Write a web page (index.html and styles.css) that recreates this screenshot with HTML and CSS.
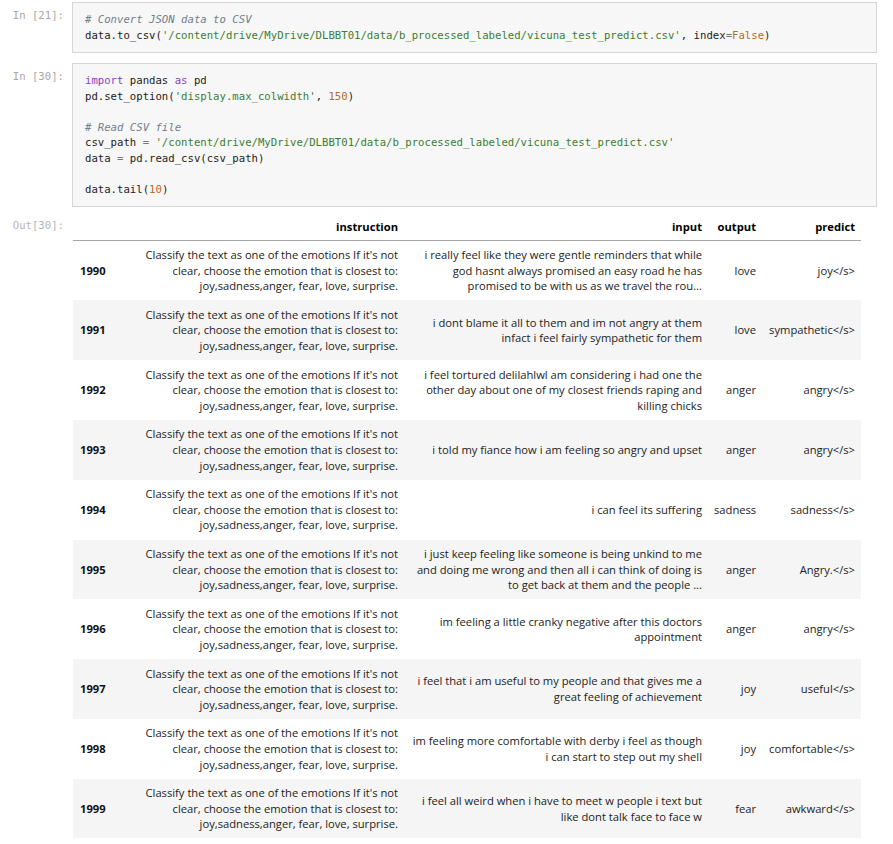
FILE: index.html
```html
<!DOCTYPE html>
<html>
<head>
<meta charset="utf-8">
<link rel="stylesheet" href="styles.css">
</head>
<body>
<div class="notebook">
  <div class="cell first">
    <div class="prompt">In&nbsp;[21]:</div>
    <div class="input"><pre class="code"><span class="cm"># Convert JSON data to CSV</span>
data.to_csv(<span class="st">'/content/drive/MyDrive/DLBBT01/data/b_processed_labeled/vicuna_test_predict.csv'</span>, index<span class="op">=</span><span class="kw2">False</span>)</pre></div>
  </div>
  <div class="cell">
    <div class="prompt">In&nbsp;[30]:</div>
    <div class="input"><pre class="code"><span class="kw">import</span> pandas <span class="kw">as</span> pd
pd.set_option(<span class="st">'display.max_colwidth'</span>, <span class="nu">150</span>)

<span class="cm"># Read CSV file</span>
csv_path <span class="op">=</span> <span class="st">'/content/drive/MyDrive/DLBBT01/data/b_processed_labeled/vicuna_test_predict.csv'</span>
data <span class="op">=</span> pd.read_csv(csv_path)

data.tail(<span class="nu">10</span>)</pre></div>
  </div>
  <div class="cell output">
    <div class="prompt out">Out[30]:</div>
    <div class="result">
      <table class="df">
        <colgroup>
          <col class="c-idx"><col class="c-ins"><col class="c-inp"><col class="c-out"><col class="c-pre">
        </colgroup>
        <thead>
          <tr><th class="idx"></th><th>instruction</th><th>input</th><th>output</th><th>predict</th></tr>
        </thead>
        <tbody>
          <tr><th class="idx">1990</th>
            <td>Classify the text as one of the emotions If it's not<br>clear, choose the emotion that is closest to:<br>joy,sadness,anger, fear, love, surprise.</td>
            <td>i really feel like they were gentle reminders that while<br>god hasnt always promised an easy road he has<br>promised to be with us as we travel the rou...</td>
            <td>love</td><td>joy&lt;/s&gt;</td></tr>
          <tr><th class="idx">1991</th>
            <td>Classify the text as one of the emotions If it's not<br>clear, choose the emotion that is closest to:<br>joy,sadness,anger, fear, love, surprise.</td>
            <td>i dont blame it all to them and im not angry at them<br>infact i feel fairly sympathetic for them</td>
            <td>love</td><td>sympathetic&lt;/s&gt;</td></tr>
          <tr><th class="idx">1992</th>
            <td>Classify the text as one of the emotions If it's not<br>clear, choose the emotion that is closest to:<br>joy,sadness,anger, fear, love, surprise.</td>
            <td>i feel tortured delilahlwl am considering i had one the<br>other day about one of my closest friends raping and<br>killing chicks</td>
            <td>anger</td><td>angry&lt;/s&gt;</td></tr>
          <tr><th class="idx">1993</th>
            <td>Classify the text as one of the emotions If it's not<br>clear, choose the emotion that is closest to:<br>joy,sadness,anger, fear, love, surprise.</td>
            <td>i told my fiance how i am feeling so angry and upset</td>
            <td>anger</td><td>angry&lt;/s&gt;</td></tr>
          <tr><th class="idx">1994</th>
            <td>Classify the text as one of the emotions If it's not<br>clear, choose the emotion that is closest to:<br>joy,sadness,anger, fear, love, surprise.</td>
            <td>i can feel its suffering</td>
            <td>sadness</td><td>sadness&lt;/s&gt;</td></tr>
          <tr><th class="idx">1995</th>
            <td>Classify the text as one of the emotions If it's not<br>clear, choose the emotion that is closest to:<br>joy,sadness,anger, fear, love, surprise.</td>
            <td>i just keep feeling like someone is being unkind to me<br>and doing me wrong and then all i can think of doing is<br>to get back at them and the people ...</td>
            <td>anger</td><td>Angry.&lt;/s&gt;</td></tr>
          <tr><th class="idx">1996</th>
            <td>Classify the text as one of the emotions If it's not<br>clear, choose the emotion that is closest to:<br>joy,sadness,anger, fear, love, surprise.</td>
            <td>im feeling a little cranky negative after this doctors<br>appointment</td>
            <td>anger</td><td>angry&lt;/s&gt;</td></tr>
          <tr><th class="idx">1997</th>
            <td>Classify the text as one of the emotions If it's not<br>clear, choose the emotion that is closest to:<br>joy,sadness,anger, fear, love, surprise.</td>
            <td>i feel that i am useful to my people and that gives me a<br>great feeling of achievement</td>
            <td>joy</td><td>useful&lt;/s&gt;</td></tr>
          <tr><th class="idx">1998</th>
            <td>Classify the text as one of the emotions If it's not<br>clear, choose the emotion that is closest to:<br>joy,sadness,anger, fear, love, surprise.</td>
            <td>im feeling more comfortable with derby i feel as though<br>i can start to step out my shell</td>
            <td>joy</td><td>comfortable&lt;/s&gt;</td></tr>
          <tr><th class="idx">1999</th>
            <td>Classify the text as one of the emotions If it's not<br>clear, choose the emotion that is closest to:<br>joy,sadness,anger, fear, love, surprise.</td>
            <td>i feel all weird when i have to meet w people i text but<br>like dont talk face to face w</td>
            <td>fear</td><td>awkward&lt;/s&gt;</td></tr>
        </tbody>
      </table>
    </div>
  </div>
</div>
</body>
</html>
```
FILE: styles.css
```css
html, body {
  margin: 0;
  padding: 0;
  background: #ffffff;
}

.notebook {
  padding-top: 2px;
  width: 877px;
}

.cell {
  display: flex;
  align-items: flex-start;
  gap: 8px;
  margin-top: 10px;
}

.cell.first {
  margin-top: 0;
}

.prompt {
  width: 64px;
  flex: none;
  text-align: right;
  font-family: "DejaVu Sans Mono", "Liberation Mono", monospace;
  font-size: 10.65px;
  line-height: 15.5px;
  color: #a8a8a8;
  padding-top: 6px;
  white-space: nowrap;
}

.input {
  flex: 1;
  background: #f7f7f7;
  border: 1px solid #d6d6d6;
  padding: 9px 12px;
}

.code {
  margin: 0;
  font-family: "DejaVu Sans Mono", "Liberation Mono", monospace;
  font-size: 10.65px;
  line-height: 15.5px;
  color: #222;
  white-space: pre;
}

.cm { color: #6e7f8e; font-style: italic; }
.st { color: #3b7d32; }
.kw { color: #8a3fbd; }
.kw2 { color: #b86a26; }
.nu { color: #b86a26; }
.op { color: #777; }

.cell.output {
  margin-top: 7px;
}

.prompt.out {
  padding-top: 4px;
  color: #b5b5b5;
}

.result {
  flex: 1;
  padding-left: 1px;
}

.df {
  table-layout: fixed;
  width: 788px;
  border-collapse: collapse;
  border-spacing: 0;
  font-family: "Open Sans", "Noto Sans", sans-serif;
  font-size: 11.2px;
  line-height: 15.6px;
  color: #222;
}

.c-idx { width: 40px; }
.c-ins { width: 291px; }
.c-inp { width: 304px; }
.c-out { width: 54px; }
.c-pre { width: 99px; }

.df th, .df td {
  text-align: right;
  vertical-align: middle;
  padding: 6.5px 6px;
  white-space: nowrap;
}

.df thead th {
  font-weight: 700;
  color: #000;
  padding: 5px 6px;
  border-bottom: 1px solid #a6a6a6;
}

.df th.idx {
  text-align: left;
  padding-left: 7px;
  font-weight: 700;
  color: #111;
}

.df tbody tr:nth-child(even) {
  background: #f5f5f5;
}
```
